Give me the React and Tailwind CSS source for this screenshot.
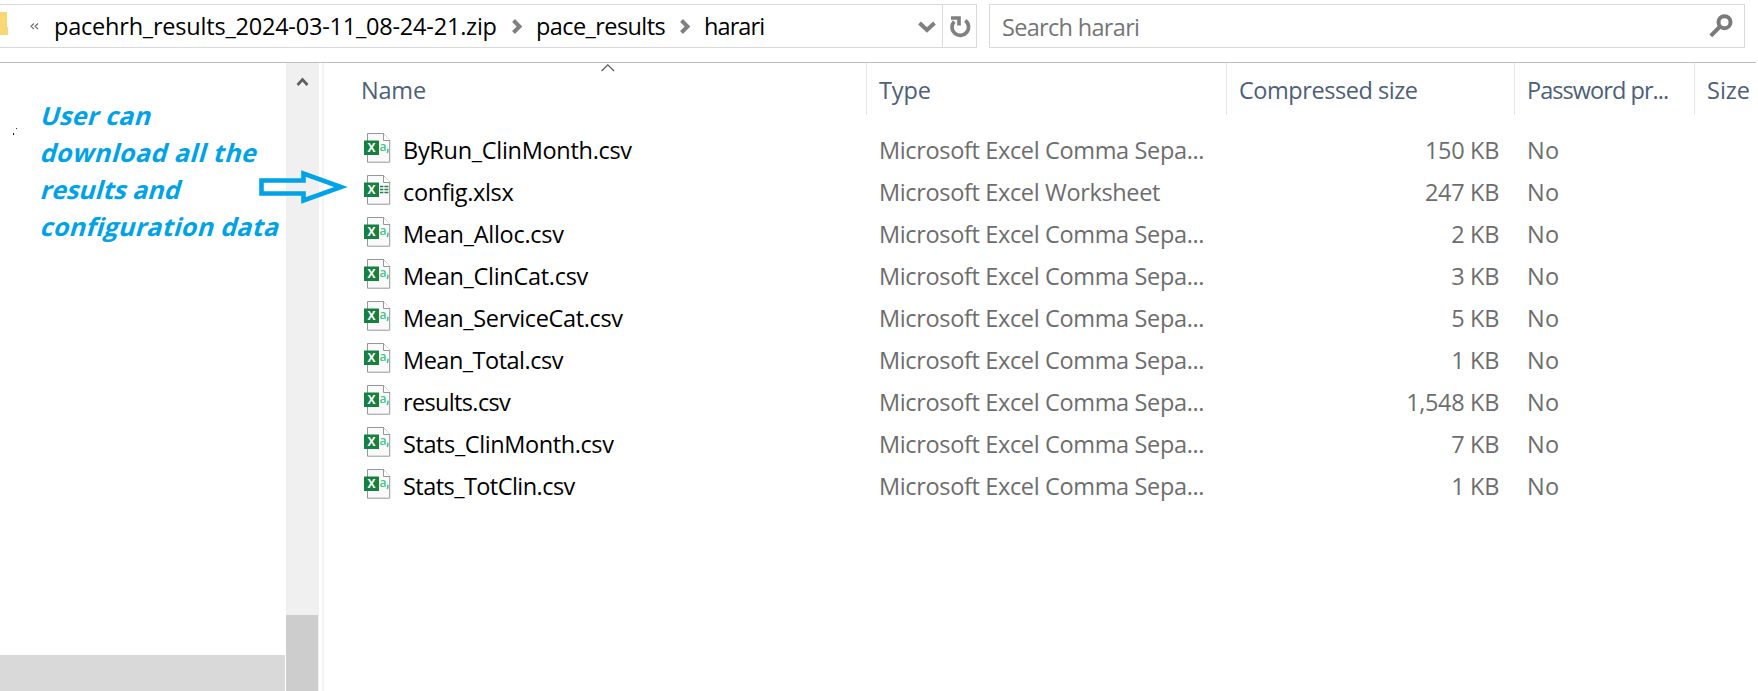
const files = [
  { name: "ByRun_ClinMonth.csv", ls: "tracking-[-0.3px]", size: "150 KB" },
  { name: "config.xlsx", ls: "tracking-[-0.36px]", size: "247 KB", sheet: true },
  { name: "Mean_Alloc.csv", ls: "tracking-[-0.28px]", size: "2 KB" },
  { name: "Mean_ClinCat.csv", ls: "tracking-[-0.3px]", size: "3 KB" },
  { name: "Mean_ServiceCat.csv", ls: "tracking-[-0.36px]", size: "5 KB" },
  { name: "Mean_Total.csv", ls: "tracking-[-0.5px]", size: "1 KB" },
  { name: "results.csv", ls: "tracking-[-0.65px]", size: "1,548 KB" },
  { name: "Stats_ClinMonth.csv", ls: "tracking-[-0.4px]", size: "7 KB" },
  { name: "Stats_TotClin.csv", ls: "tracking-[-0.55px]", size: "1 KB" },
];

function FileIcon({ sheet }) {
  return (
    <svg width="27" height="30" viewBox="0 0 27 30" className="shrink-0">
      <path d="M3.5 .5H19.5L25.7 7.5V29.2H3.5Z" fill="#fafafa" stroke="#979797" />
      <path d="M19.5 .5V7.5H26" fill="#fff" stroke="#979797" />
      <rect x="0" y="7.5" width="15" height="14.5" fill="#15803f" />
      <text x="7.5" y="18.8" textAnchor="middle" fontSize="12" fontWeight="700" letterSpacing="0" fill="#fff">X</text>
      {sheet ? (
        <path d="M16 11.5h3.4M20.4 11.5h4M16 14.5h3.4M20.4 14.5h4M16 17.5h3.4M20.4 17.5h4" stroke="#2a7d50" strokeWidth="1.4" />
      ) : (
        <>
          <text x="15.6" y="18.2" fontSize="12" fontWeight="600" letterSpacing="0" fill="#41c48a">a</text>
          <path d="M23.9 15.8V17.8L23.2 20" fill="none" stroke="#41c48a" strokeWidth="1.5" />
        </>
      )}
    </svg>
  );
}

function CrumbChevron() {
  return (
    <svg width="11" height="15" viewBox="0 0 11 15" className="shrink-0">
      <path d="M1.5 1.5L7.5 7.5L1.5 13.5" fill="none" stroke="#808080" strokeWidth="4" />
    </svg>
  );
}

function TopBar() {
  return (
    <header className="flex h-[63px] w-[1756px] items-start border-b border-[#bdbdbd] pt-1">
      <div className="flex h-11 w-[977px] border border-l-0 border-[#d9d9d9]">
        <div className="flex w-[942px] items-center">
          <svg width="8" height="24" viewBox="0 0 8 24" className="mb-[4px] shrink-0">
            <path d="M0 0H7V15H8V23H0Z" fill="#f9d775" />
          </svg>
          <svg width="9" height="7" viewBox="0 0 9 7" className="ml-[22px] shrink-0">
            <path d="M4 .5L1 3.3L4 6M8 .5L5 3.3L8 6" fill="none" stroke="#666" strokeWidth="1.1" />
          </svg>
          <span className="ml-[15px] w-[456px] pt-[2px] tracking-[-0.21px]">pacehrh_results_2024-03-11_08-24-21.zip</span>
          <span className="ml-[2px]"><CrumbChevron /></span>
          <span className="ml-[13px] w-[144px] pt-[2px] tracking-[-0.58px]">pace_results</span>
          <CrumbChevron />
          <span className="ml-[13px] grow pt-[2px] tracking-[-0.9px]">harari</span>
          <svg width="18" height="12" viewBox="0 0 18 12" className="mt-[2px] mr-[6px] shrink-0">
            <path d="M1.5 2L9 9L16.5 2" fill="none" stroke="#808080" strokeWidth="4" />
          </svg>
        </div>
        <div className="flex grow items-center justify-center border-l border-[#d9d9d9]">
          <svg width="22" height="22" viewBox="0 0 22 22" className="mt-[1px]">
            <path d="M16.3 4.4A8.3 8.3 0 1 1 5.2 5.4M2 2H10V9.5" fill="none" stroke="#808080" strokeWidth="3.7" />
          </svg>
        </div>
      </div>
      <div className="ml-3 flex h-11 w-[756px] items-center justify-between border border-[#d9d9d9] pr-[11px] pl-3 text-[#757575]">
        <span className="pt-[4px] tracking-[-0.68px]">Search harari</span>
        <svg width="24" height="24" viewBox="0 0 24 24">
          <circle cx="15.5" cy="8.2" r="6" fill="none" stroke="#7a7a7a" strokeWidth="4" />
          <path d="M11.5 12L1.8 21.8" stroke="#7a7a7a" strokeWidth="4" />
        </svg>
      </div>
    </header>
  );
}

const note = [
  ["User can", "tracking-[0.3px]"],
  ["download all the", "tracking-[0.5px]"],
  ["results and", "tracking-[0px]"],
  ["configuration data", "tracking-[0.32px]"],
];

function Sidebar() {
  return (
    <aside className="relative flex w-[324px] shrink-0 border-r-2 border-[#f5f5f5]">
      <div className="flex w-[286px] flex-col justify-between">
        <div className="pt-[34px] pl-[41.5px] text-[25px] leading-[37px] font-bold whitespace-nowrap text-[#00a2e8]">
          {note.map(([line, ls]) => (
            <div key={line} className="flex">
              <span className={`block -skew-x-[16deg] ${ls}`}>{line}</span>
            </div>
          ))}
        </div>
        <div className="h-9 w-[285px] bg-[#d9d9d9]" />
      </div>
      <div className="flex w-[33px] flex-col justify-between bg-[#f0f0f0]">
        <svg width="33" height="34" viewBox="0 0 33 34">
          <path d="M11.5 22L16.5 16.5L21.5 22" fill="none" stroke="#606060" strokeWidth="2.7" />
        </svg>
        <div className="h-[76px] w-8 bg-[#cdcdcd]" />
      </div>
      <svg width="90" height="34" viewBox="0 0 90 34" className="absolute top-[107px] left-[259px]">
        <path d="M2.5 10.5H44.5V3.5L82 17L44.5 30.5V23.5H2.5Z" fill="none" stroke="#00a2e8" strokeWidth="4.6" />
      </svg>
      <svg width="6" height="8" viewBox="0 0 6 8" className="absolute top-[64px] left-[12px]">
        <path d="M4 1h1v1h-1z" fill="#443300" />
        <path d="M1 6h1v2h-1z" fill="#001050" />
      </svg>
    </aside>
  );
}

const cols = "grid grid-cols-[543px_360px_288px_180px_62px]";

function FileList() {
  return (
    <main className="grow">
      <div className={`${cols} relative h-[52px] leading-[50px] text-[#4c607a]`}>
        <div className="border-r border-[#e5e5e5] pt-[2px] pl-[37px] tracking-[-0.2px]">Name</div>
        <div className="border-r border-[#e5e5e5] pt-[2px] pl-3 tracking-[-0.15px]">Type</div>
        <div className="border-r border-[#e5e5e5] pt-[2px] pl-3 tracking-[-0.45px]">Compressed size</div>
        <div className="border-r border-[#e5e5e5] pt-[2px] pl-3 tracking-[-0.95px]">Password pr...</div>
        <div className="pt-[2px] pl-3">Size</div>
        <svg width="14" height="8" viewBox="0 0 14 8" className="absolute top-[1px] left-[277px]">
          <path d="M.5 7L6.8 .8L13 7" fill="none" stroke="#555" strokeWidth="1.1" />
        </svg>
      </div>
      <div className="pt-[14px] text-[#6d6d6d]">
        {files.map((f) => (
          <div key={f.name} className={`${cols} h-[42px] leading-[42px]`}>
            <div className="flex pl-[40px] text-black">
              <div className="pt-[4px]"><FileIcon sheet={f.sheet} /></div>
              <span className={`pl-3 ${f.ls}`}>{f.name}</span>
            </div>
            <div className="pl-3 tracking-[-0.35px]">
              {f.sheet ? "Microsoft Excel Worksheet" : "Microsoft Excel Comma Sepa..."}
            </div>
            <div className="pr-[16px] text-right tracking-[-0.33px]">{f.size}</div>
            <div className="pl-3 tracking-[0.3px]">No</div>
            <div />
          </div>
        ))}
      </div>
    </main>
  );
}

export default function App() {
  return (
    <div className="flex h-[691px] w-[1758px] flex-col overflow-hidden bg-white font-['Open_Sans','Noto_Sans',sans-serif] text-[23.5px] whitespace-nowrap text-black">
      <TopBar />
      <div className="flex grow">
        <Sidebar />
        <FileList />
      </div>
    </div>
  );
}
